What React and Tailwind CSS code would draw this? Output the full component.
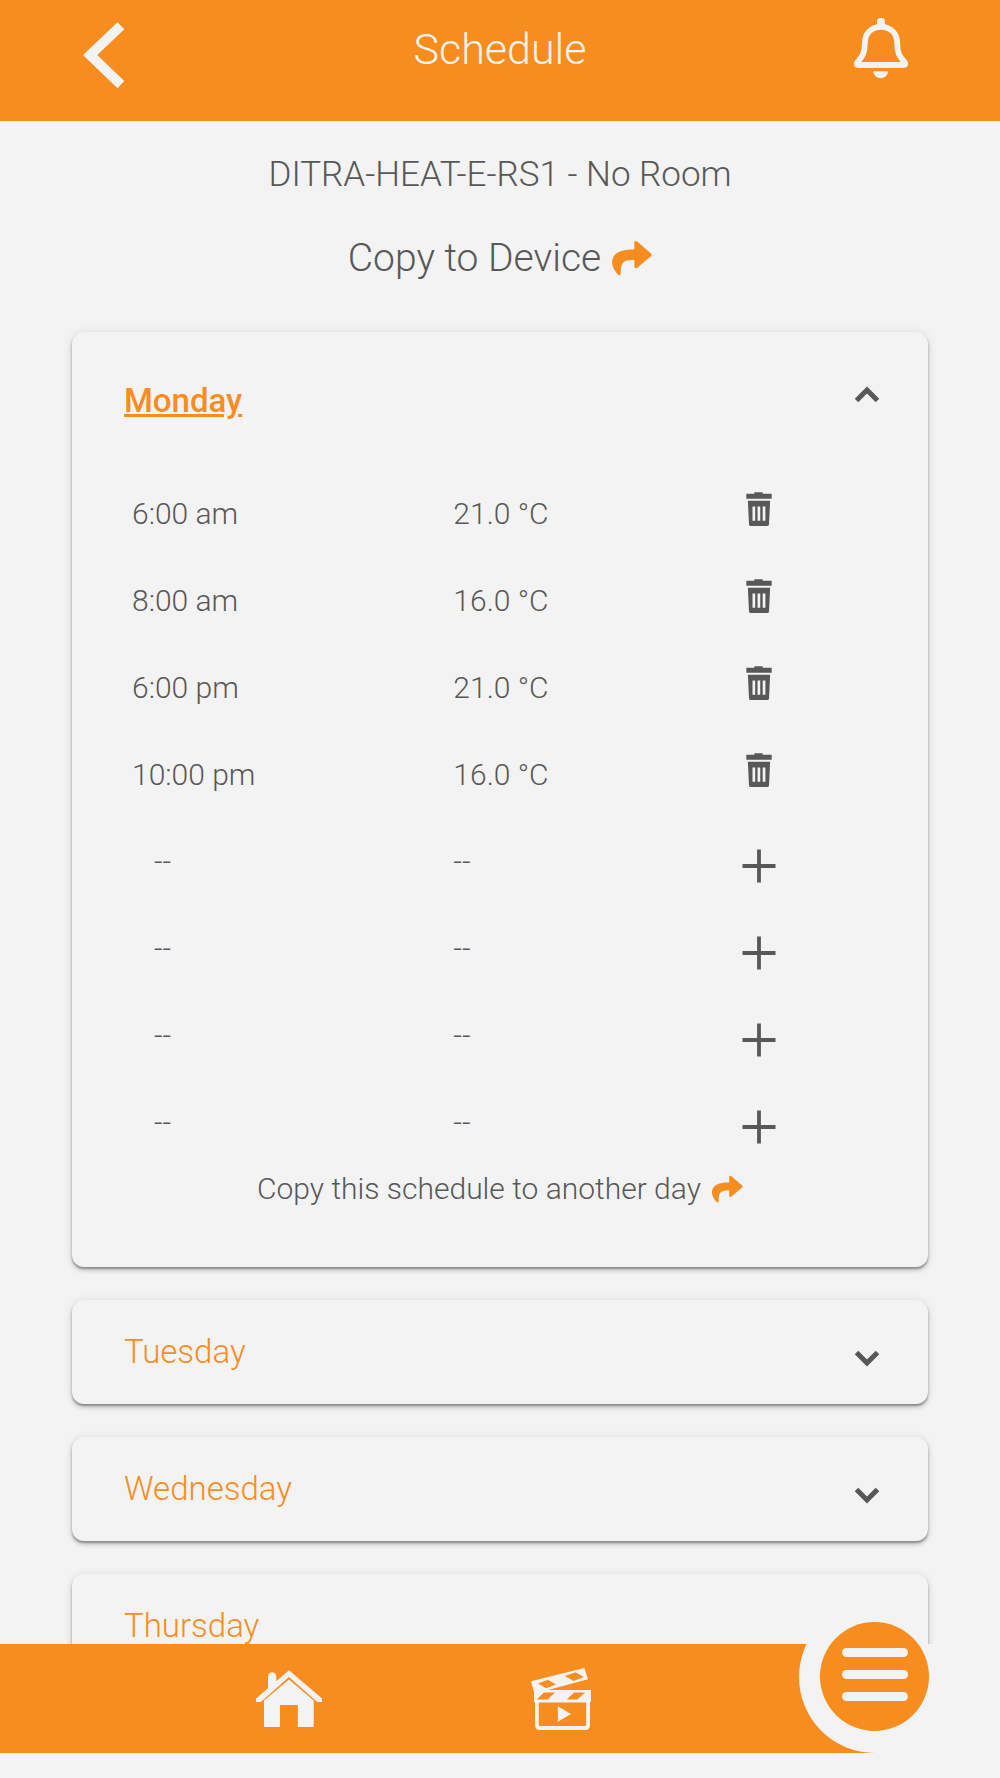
import React, { useState } from 'react';

const days = ['Monday', 'Tuesday', 'Wednesday', 'Thursday', 'Friday', 'Saturday', 'Sunday'];

const initialEvents = [
    { time: '6:00 am', temp: '21.0 °C' },
    { time: '8:00 am', temp: '16.0 °C' },
    { time: '6:00 pm', temp: '21.0 °C' },
    { time: '10:00 pm', temp: '16.0 °C' },
];

const MAX_EVENTS = 8;

// ************************************************************************************************
// icons
const BackIcon = () => (
    <svg className="w-[42px] h-[68px]" viewBox="23 21 42 68" fill="currentColor" aria-hidden="true">
        <path d="M23 55 57.5 22.3 64.3 29.3 37.3 55 64.3 81 57.5 88.3Z" />
    </svg>
);

const BellIcon = () => (
    <svg className="w-[54px] h-[62px]" viewBox="24 17 54 62" aria-hidden="true">
        <path
            d="M51 25.8C40.5 25.8 34.8 33 34.8 42.5C34.8 52 32.5 55.5 28 60.5C25.6 63.2 26.8 64 28.5 64H73.5C75.2 64 76.4 63.2 74 60.5C69.5 55.5 67.2 52 67.2 42.5C67.2 33 61.5 25.8 51 25.8Z"
            fill="none"
            stroke="currentColor"
            strokeWidth="5.8"
            strokeLinejoin="round"
        />
        <path d="M47 26V20.8a4 4 0 0 1 8 0V26ZM43 70.2H58.3A7.7 8 0 0 1 43 70.2Z" fill="currentColor" />
    </svg>
);

const ShareIcon = ({ className }) => (
    <svg className={className} viewBox="51 18 41 36" fill="#f78d1e" aria-hidden="true">
        <path d="M74.3 20.5C74.3 18.8 76 18.4 77.2 19.5L91 31.6C91.9 32.5 91.9 33.4 91 34.2L77.2 45.8C76 46.8 74.3 46.3 74.3 44.8V38C64 37.3 60.3 40.5 60.8 50.5C60.9 53.2 59.2 54.3 57.6 52.3C54 48 51.8 43.5 52.1 39.5C52.8 30.5 61.5 27.5 74.3 27.5Z" />
    </svg>
);

const ChevronIcon = ({ open }) => (
    <svg className={open ? 'size-10 rotate-180' : 'size-10'} viewBox="0 0 40 40" fill="none" aria-hidden="true">
        <path d="M9.5 20.5 20 31 30.5 20.5" stroke="#585858" strokeWidth="5" />
    </svg>
);

const TrashIcon = () => (
    <svg className="w-[26px] h-[34px]" viewBox="46 173 25 33" fill="#585858" aria-hidden="true">
        <path d="M54 173.2H62V174.7H70.8V179.6H46.2V174.7H54Z" />
        <path
            fillRule="evenodd"
            d="M47.7 181.4H69.3L68.2 204.5Q68 206 66.5 206H50.5Q49 206 48.8 204.5ZM52.2 187V201H54.8V187ZM57.1 187V201H59.7V187ZM62.1 187V201H64.7V187Z"
        />
    </svg>
);

const PlusIcon = () => (
    <svg className="w-[34px] h-[34px]" viewBox="0 0 34 34" aria-hidden="true">
        <path d="M0.5 17H33.5M17 0.5V33.5" stroke="#585858" strokeWidth="3.8" />
    </svg>
);

const HomeIcon = () => (
    <svg className="w-[66px] h-[58px]" viewBox="26 30 66 58" fill="currentColor" aria-hidden="true">
        <path d="M59 30.2 92 58.6V62H87.2L59 37 30.8 62H26V58.6Z" />
        <path d="M38 50V36.5a4 4 0 0 1 8.3 0V43Z" />
        <path d="M59 39.6 83.7 60.5V86Q83.7 87 82.7 87H67.8V65H50V87H35Q34 87 34 86V60.5Z" />
    </svg>
);

const ScenesIcon = () => (
    <svg className="w-[62px] h-[64px]" viewBox="20 27 62 64" fill="currentColor" aria-hidden="true">
        <path
            fillRule="evenodd"
            d="M21 41.3 74.3 28 78 39.2 38 50H81V62H80V85Q80 90 75 90H30Q25 90 25 85V62H24V52ZM28 43.5 38 39.8 46 44.5 36 48.3ZM54.8 36 65.5 32.2 74 37 63.5 41ZM34 52.6 45 52.6 37.5 59.4H26.8ZM64 52.6H75L67.5 59.4H56.8ZM28.8 62.5V85Q28.8 86 30 86H75Q76.2 86 76.2 85V62.5Z"
        />
        <path d="M47.8 66.2 61 74 47.8 81.8Z" />
    </svg>
);

// ************************************************************************************************
const DayTable = ({ day, events, onRemove, onAdd }) => {
    const emptyRows = Array.from({ length: MAX_EVENTS - events.length });

    return (
        <div className="px-[52px] pb-[55px]">
            <table aria-label={`${day} schedule`} className="w-full table-fixed text-left text-[30px] leading-10">
                <colgroup>
                    <col className="w-[43%]" />
                    <col className="w-[26%]" />
                    <col className="w-[31%]" />
                </colgroup>
                <tbody>
                    {events.map((event, idx) => (
                        <tr key={idx} className="h-[87px]">
                            <td className="pl-2">{event.time}</td>
                            <td className="pl-1.5">{event.temp}</td>
                            <td className="text-center">
                                <button
                                    type="button"
                                    aria-label={`Delete ${event.time}`}
                                    className="pb-2.5 align-middle"
                                    onClick={() => onRemove(idx)}
                                >
                                    <TrashIcon />
                                </button>
                            </td>
                        </tr>
                    ))}
                    {emptyRows.map((_, idx) => (
                        <tr key={`empty-${idx}`} className="h-[87px]">
                            <td className="pl-[30px]">--</td>
                            <td className="pl-1.5">--</td>
                            <td className="text-center">
                                <button type="button" aria-label="Add event" className="pt-2 align-middle" onClick={onAdd}>
                                    <PlusIcon />
                                </button>
                            </td>
                        </tr>
                    ))}
                </tbody>
            </table>
            <button type="button" className="mx-auto flex items-center gap-2.5 text-[30px] leading-[46px]">
                Copy this schedule to another day
                <ShareIcon className="w-8 h-7" />
            </button>
        </div>
    );
};

// ************************************************************************************************
const App = () => {
    const [openDay, setOpenDay] = useState('Monday');
    const [events, setEvents] = useState(initialEvents);

    const handleRemove = (idx) => {
        setEvents(events.filter((_, i) => i !== idx));
    };

    const handleAdd = () => {
        setEvents([...events, { time: '12:00 pm', temp: '21.0 °C' }]);
    };

    return (
        <div className="flex h-screen flex-col bg-[#f3f3f3] font-['Roboto',sans-serif] font-light text-[#585858]">
            <header className="bg-[#f78d1e] pb-6 text-[#f3f3f3]">
                <div className="grid h-[97px] grid-cols-[1fr_auto_1fr] items-center">
                    <button type="button" aria-label="Back" className="ml-[83px] mt-3 justify-self-start">
                        <BackIcon />
                    </button>
                    <h1 className="text-[43px] leading-[52px]">Schedule</h1>
                    <button type="button" aria-label="Notifications" className="mr-[92px] justify-self-end">
                        <BellIcon />
                    </button>
                </div>
            </header>

            <main className="min-h-0 flex-1 overflow-y-auto px-[72px] pt-[34px] [scrollbar-width:none]">
                <h2 className="text-center text-[35px] leading-10">DITRA-HEAT-E-RS1 - No Room</h2>
                <button type="button" className="mx-auto mt-[39px] flex items-center gap-2.5 text-[39px] leading-[48px]">
                    Copy to Device
                    <ShareIcon className="w-[41px] h-9" />
                </button>

                <div className="mt-[50px] flex flex-col gap-[33px] pb-[33px]">
                    {days.map((day) => {
                        const open = day === openDay;
                        return (
                            <section
                                key={day}
                                className="rounded-xl shadow-[0_2px_2px_rgba(0,0,0,0.3),0_4px_4px_rgba(0,0,0,0.12),0_1px_9px_rgba(0,0,0,0.12)] bg-[#f3f3f3]"
                            >
                                <button
                                    type="button"
                                    aria-expanded={open}
                                    onClick={() => setOpenDay(open ? '' : day)}
                                    className={`flex w-full items-center justify-between pl-[52px] pr-[41px] text-[33px] leading-10 text-[#f78d1e] ${open ? 'h-[138px] font-medium underline' : 'h-[104px]'}`}
                                >
                                    {day}
                                    <ChevronIcon open={open} />
                                </button>
                                {open && <DayTable day={day} events={events} onRemove={handleRemove} onAdd={handleAdd} />}
                            </section>
                        );
                    })}
                </div>
            </main>

            <footer className="relative pb-[25px]">
                <nav className="relative mr-[125px] flex h-[109px] items-center justify-center gap-[208px] overflow-hidden bg-[#f78d1e] pr-7 text-[#f3f3f3]">
                    <a href="#home" aria-label="Home">
                        <HomeIcon />
                    </a>
                    <a href="#scenes" aria-label="Scenes">
                        <ScenesIcon />
                    </a>
                    {/* notch around the menu button */}
                    <span className="absolute -right-[76px] bottom-0 size-[152px] rounded-full bg-[#f3f3f3]" />
                </nav>
                <button
                    type="button"
                    aria-label="Menu"
                    className="absolute right-[71px] -top-[22px] flex size-[109px] flex-col items-center justify-center gap-[13px] rounded-full bg-[#f78d1e] pb-1"
                >
                    <span className="h-[9px] w-[66px] rounded-full bg-[#f3f3f3]" />
                    <span className="h-[9px] w-[66px] rounded-full bg-[#f3f3f3]" />
                    <span className="h-[9px] w-[66px] rounded-full bg-[#f3f3f3]" />
                </button>
            </footer>
        </div>
    );
};

export default App;
